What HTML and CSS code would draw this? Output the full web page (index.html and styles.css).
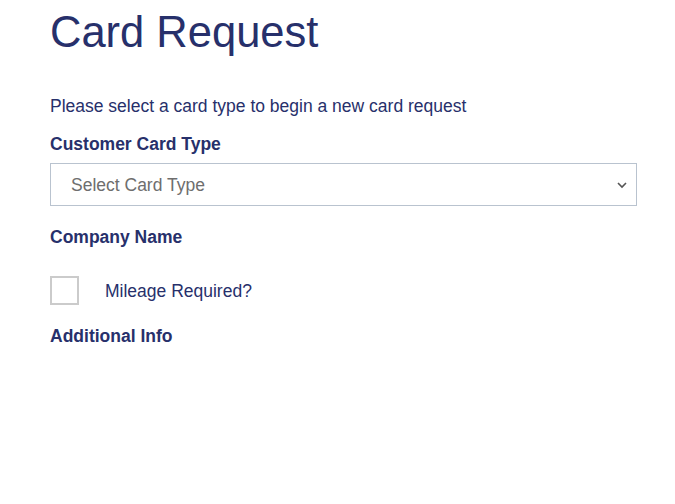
FILE: index.html
```html
<!DOCTYPE html>
<html>
<head>
  <meta charset="UTF-8">
  <title>Card Request</title>
  <link rel="stylesheet" href="styles.css">
</head>
<body>
  <div class="page">
    <h1>Card Request</h1>
    <p class="intro">Please select a card type to begin a new card request</p>

    <form id="cardForm">
      <label for="cardType" class="field-label">Customer Card Type</label>
      <div class="select-wrap">
        <select id="cardType" name="cardType">
          <option value="">Select Card Type</option>
        </select>
        <svg class="chevron" width="12" height="8" viewBox="0 0 12 8"><path d="M2 2l4 4 4-4" fill="none" stroke="#555" stroke-width="1.6"/></svg>
      </div>

      <label class="field-label company">Company Name</label>

      <div class="check-row">
        <input type="checkbox" id="mileage" name="mileage">
        <label for="mileage" class="check-label">Mileage Required?</label>
      </div>

      <label class="field-label extra">Additional Info</label>
    </form>
  </div>
</body>
</html>
```

FILE: styles.css
```css
body { margin: 0; font-family: "Liberation Sans", Arial, sans-serif; color: #27306b; background: #fff; }
.page { padding: 0 38px 0 50px; }
h1 { font-size: 43.5px; font-weight: normal; margin: 0; padding-top: 8px; line-height: 48px; }
.intro { font-size: 17.5px; margin: 39px 0 0; line-height: 22px; }
.field-label { display: block; font-weight: bold; font-size: 17.5px; line-height: 22px; margin-top: 16px; }
.select-wrap { position: relative; margin-top: 8px; }
select { width: 100%; height: 43px; padding: 0 20px; font-family: inherit; font-size: 17.5px; color: #6e6e6e; border: 1px solid #b9c3cf; border-radius: 0; background: #fff; appearance: none; }
.chevron { position: absolute; right: 9px; top: 18px; }
.field-label.company { margin-top: 20px; }
.check-row { display: flex; align-items: center; margin-top: 28px; }
.check-row input { appearance: none; width: 29px; height: 29px; margin: 0; border: 2px solid #cbcbcb; background: #fff; }
.check-label { font-size: 17.5px; margin-left: 26px; padding-top: 1px; }
.field-label.extra { margin-top: 20px; }
```
